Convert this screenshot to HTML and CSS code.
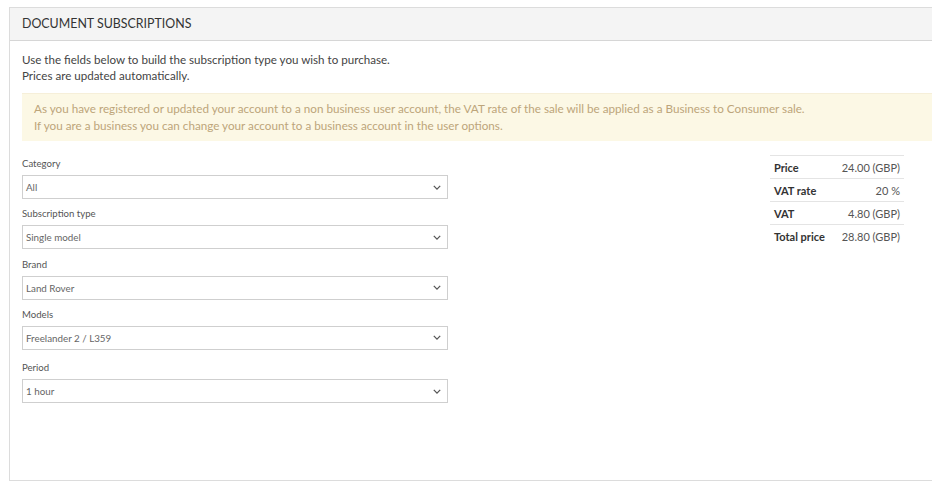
FILE: index.html
```html
<!DOCTYPE html>
<html>
<head>
<meta charset="utf-8">
<link rel="stylesheet" href="styles.css">
</head>
<body>
<div class="panel">
  <div class="panel-heading">DOCUMENT SUBSCRIPTIONS</div>
  <div class="panel-body">
    <p class="intro">Use the fields below to build the subscription type you wish to purchase.<br>Prices are updated automatically.</p>
    <div class="alert">As you have registered or updated your account to a non business user account, the VAT rate of the sale will be applied as a Business to Consumer sale.<br>If you are a business you can change your account to a business account in the user options.</div>
    <div class="content">
      <div class="form">
        <div class="field">
          <div class="label">Category</div>
          <div class="select"><span>All</span><svg class="chev" viewBox="0 0 10 6"><path d="M1 1l4 4 4-4" fill="none" stroke="#555" stroke-width="1.6"/></svg></div>
        </div>
        <div class="field">
          <div class="label">Subscription type</div>
          <div class="select"><span>Single model</span><svg class="chev" viewBox="0 0 10 6"><path d="M1 1l4 4 4-4" fill="none" stroke="#555" stroke-width="1.6"/></svg></div>
        </div>
        <div class="field">
          <div class="label">Brand</div>
          <div class="select"><span>Land Rover</span><svg class="chev" viewBox="0 0 10 6"><path d="M1 1l4 4 4-4" fill="none" stroke="#555" stroke-width="1.6"/></svg></div>
        </div>
        <div class="field">
          <div class="label">Models</div>
          <div class="select"><span>Freelander 2 / L359</span><svg class="chev" viewBox="0 0 10 6"><path d="M1 1l4 4 4-4" fill="none" stroke="#555" stroke-width="1.6"/></svg></div>
        </div>
        <div class="field">
          <div class="label">Period</div>
          <div class="select"><span>1 hour</span><svg class="chev" viewBox="0 0 10 6"><path d="M1 1l4 4 4-4" fill="none" stroke="#555" stroke-width="1.6"/></svg></div>
        </div>
      </div>
      <table class="prices">
        <tr><th>Price</th><td>24.00 (GBP)</td></tr>
        <tr><th>VAT rate</th><td>20 %</td></tr>
        <tr><th>VAT</th><td>4.80 (GBP)</td></tr>
        <tr><th>Total price</th><td>28.80 (GBP)</td></tr>
      </table>
    </div>
  </div>
</div>
</body>
</html>
```

FILE: styles.css
```css
html, body {
  margin: 0;
  padding: 0;
  background: #fff;
  overflow: hidden;
}
body {
  font-family: "Lato", "Open Sans", sans-serif;
  color: #444;
  width: 932px;
  height: 499px;
}
.panel {
  margin: 7px 0 0 9px;
  width: 960px;
  height: 474px;
  border: 1px solid #dcdcdc;
  border-right: none;
  box-sizing: border-box;
  display: flex;
  flex-direction: column;
}
.panel-heading {
  height: 33px;
  box-sizing: border-box;
  background: #f4f4f4;
  border-bottom: 1px solid #d6d6d6;
  padding: 0 12px;
  font-size: 12.4px;
  line-height: 32px;
  color: #333;
}
.panel-body {
  padding: 11px 0 0 12px;
}
.intro {
  margin: 0;
  font-size: 11.6px;
  line-height: 16px;
  color: #444;
}
.alert {
  margin-top: 9px;
  background: #fcf8e5;
  border-top: 1px solid #f6efd9;
  padding: 6px 10px 6px 12px;
  font-size: 11.7px;
  line-height: 17px;
  color: #bda57a;
  height: 35px;
}
.content {
  display: flex;
  margin-top: 16px;
}
.form {
  width: 426px;
  display: flex;
  flex-direction: column;
  gap: 8.3px;
}
.field {
  display: flex;
  flex-direction: column;
}
.label {
  font-size: 9.6px;
  line-height: 14px;
  color: #555;
  margin-bottom: 4px;
}
.field:last-child .label { margin-top: 3px; }
.select {
  height: 24px;
  border: 1px solid #cfcfcf;
  box-sizing: border-box;
  display: flex;
  align-items: center;
  justify-content: space-between;
  padding: 0 6px 0 3px;
  font-size: 9.8px;
  color: #666;
}
.chev {
  width: 8px;
  height: 5px;
}
.prices {
  margin-left: 322px;
  margin-top: -2px;
  border-collapse: collapse;
  font-size: 11px;
  width: 134px;
  align-self: flex-start;
}
.prices tr {
  border-top: 1px solid #e4e4e4;
}
.prices th {
  text-align: left;
  font-weight: 700;
  color: #333;
  padding: 0 4px;
  height: 22px;
  white-space: nowrap;
}
.prices td {
  text-align: right;
  color: #555;
  padding: 0 4px 0 0;
  white-space: nowrap;
}
```
